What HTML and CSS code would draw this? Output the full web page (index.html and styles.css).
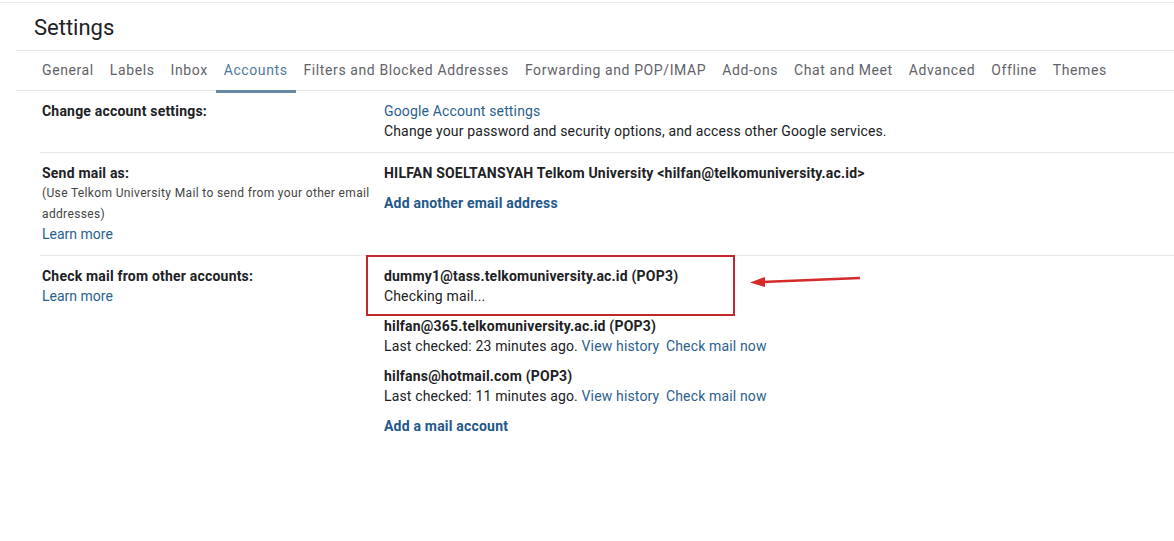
FILE: index.html
```html
<!DOCTYPE html>
<html lang="en">
<head>
    <meta charset="UTF-8">
    <title>Settings</title>
    <link rel="stylesheet" href="styles.css">
</head>
<body>
    <div class="page">
        <h1 class="title">Settings</h1>

        <nav class="tabs">
            <a class="tab">General</a>
            <a class="tab">Labels</a>
            <a class="tab">Inbox</a>
            <a class="tab active">Accounts</a>
            <a class="tab">Filters and Blocked Addresses</a>
            <a class="tab">Forwarding and POP/IMAP</a>
            <a class="tab">Add-ons</a>
            <a class="tab">Chat and Meet</a>
            <a class="tab">Advanced</a>
            <a class="tab">Offline</a>
            <a class="tab">Themes</a>
        </nav>

        <div class="row">
            <div class="label">
                <b>Change account settings:</b>
            </div>
            <div class="value">
                <a class="link">Google Account settings</a>
                <div>Change your password and security options, and access other Google services.</div>
            </div>
        </div>

        <div class="row">
            <div class="label">
                <b>Send mail as:</b>
                <div class="note">(Use Telkom University Mail to send from your other email addresses)</div>
                <a class="link">Learn more</a>
            </div>
            <div class="value">
                <b>HILFAN SOELTANSYAH Telkom University &lt;hilfan@telkomuniversity.ac.id&gt;</b>
                <a class="link strong spaced">Add another email address</a>
            </div>
        </div>

        <div class="row last">
            <div class="label">
                <b>Check mail from other accounts:</b>
                <a class="link">Learn more</a>
            </div>
            <div class="value">
                <div class="account highlighted">
                    <b>dummy1@tass.telkomuniversity.ac.id (POP3)</b>
                    <div>Checking mail...</div>
                    <svg class="arrow" width="120" height="20" viewBox="0 0 120 20">
                        <line x1="112" y1="6" x2="14" y2="10" stroke="#d62a2a" stroke-width="2.5"/>
                        <polygon points="2,10.5 17,5 17,15" fill="#d62a2a"/>
                    </svg>
                </div>
                <div class="account">
                    <b>hilfan@365.telkomuniversity.ac.id (POP3)</b>
                    <div>Last checked: 23 minutes ago. <a class="link">View history</a> <a class="link">Check mail now</a></div>
                </div>
                <div class="account">
                    <b>hilfans@hotmail.com (POP3)</b>
                    <div>Last checked: 11 minutes ago. <a class="link">View history</a> <a class="link">Check mail now</a></div>
                </div>
                <a class="link strong">Add a mail account</a>
            </div>
        </div>
    </div>
</body>
</html>
```

FILE: styles.css
```css
body {
    margin: 0;
    font-family: Roboto, "Liberation Sans", sans-serif;
    font-size: 14px;
    color: #202124;
    background: #fff;
}
.page {
    border-top: 1px solid #ececec;
    margin-top: 2px;
}
.title {
    margin: 0 0 0 16px;
    padding: 13px 0 0 18px;
    height: 34px;
    font-size: 22px;
    font-weight: 400;
    line-height: 24px;
    border-bottom: 1px solid #e8e8e8;
}
.tabs {
    display: flex;
    margin-left: 16px;
    padding-left: 18px;
    height: 39px;
    border-bottom: 1px solid #e8e8e8;
}
.tab {
    padding: 0 8px;
    line-height: 38px;
    color: #5f6368;
    letter-spacing: 0.6px;
    border-bottom: 3px solid transparent;
    margin-bottom: -3px;
    white-space: nowrap;
}
.tab.active {
    color: #4e7a9c;
    border-bottom-color: #6688a4;
}
.row {
    display: flex;
    margin-left: 40px;
    padding: 10px 0 11px;
    line-height: 20px;
    border-bottom: 1px solid #e8e8e8;
}
.row.last {
    border-bottom: none;
}
.label {
    width: 342px;
    padding-left: 2px;
}
.value {
    letter-spacing: 0.15px;
}
.label b, .value b {
    display: block;
    letter-spacing: 0.2px;
}
.note {
    font-size: 12px;
    line-height: 20.5px;
    letter-spacing: 0.35px;
    color: #444;
}
.link {
    display: block;
    color: #2b5f8e;
}
.value .account .link {
    display: inline;
    margin-right: 3px;
}
.link.strong {
    font-weight: 700;
    letter-spacing: 0.2px;
    color: #24588a;
}
.link.spaced {
    margin-top: 10px;
}
.account {
    margin-bottom: 10px;
}
.account.highlighted {
    position: relative;
}
.account.highlighted::before {
    content: "";
    position: absolute;
    left: -18px;
    top: -11px;
    width: 365px;
    height: 57px;
    border: 2px solid #c0282d;
}
.arrow {
    position: absolute;
    left: 364px;
    top: 6px;
}
```
